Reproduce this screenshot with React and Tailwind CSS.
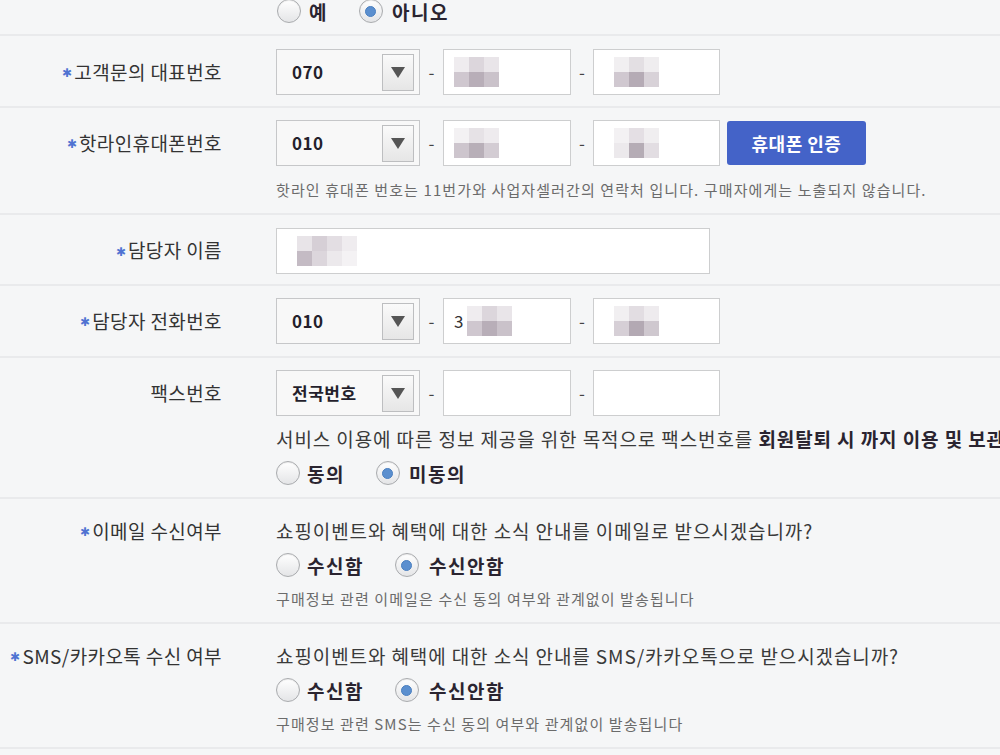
import React from 'react'

const font = { fontFamily: '"Noto Sans CJK KR", "Noto Sans", sans-serif' }

function Radio({ checked, label, gap = 'ml-[7px]' }) {
  return (
    <label className="flex items-center">
      <span className="w-[24px] h-[24px] rounded-full border border-[#a9abae] bg-gradient-to-b from-white to-[#e4e5e7] shadow-[inset_0_1px_1px_rgba(0,0,0,0.08)] flex items-center justify-center">
        {checked && <span className="w-[11px] h-[11px] rounded-full bg-[#5b8fcf] border border-[#4a7fc0]" />}
      </span>
      <span className={`${gap} text-[19px] font-bold tracking-[1.5px] text-[#2a2430] leading-none`}>{label}</span>
    </label>
  )
}

function Label({ children, className = 'h-[46px]', required = true }) {
  return (
    <div className={`w-[222px] shrink-0 flex items-center justify-end text-[19px] tracking-[0.4px] text-[#333] ${className}`}>
      {required && <span className="text-[#4f73d2] text-[12px] mr-[2px] leading-none">✱</span>}
      {children}
    </div>
  )
}

function Select({ value }) {
  return (
    <div className="w-[144px] h-[46px] border border-[#c6c7c9] bg-[#f8f8f8] flex items-center justify-between pl-[15px] pr-[5px]">
      <span className="text-[17px] font-bold tracking-[0.5px] text-[#241f2c]">{value}</span>
      <span className="w-[32px] h-[37px] border border-[#bdbec0] bg-gradient-to-b from-[#fafafa] to-[#e6e6e6] flex items-center justify-center">
        <svg width="14" height="11" viewBox="0 0 14 11">
          <path d="M0 0 H14 L7 11 Z" fill="#555" />
        </svg>
      </span>
    </div>
  )
}

function Mosaic({ rows, offset = 'ml-[10px]' }) {
  return (
    <div className={`${offset} flex flex-col`}>
      {rows.map((r, i) => (
        <div key={i} className="flex">
          {r.map((c, j) => (
            <span key={j} className="w-[15px] h-[15px] blur-[0.6px]" style={{ background: c }} />
          ))}
        </div>
      ))}
    </div>
  )
}

function Input({ w = 'w-[128px]', children }) {
  return (
    <div className={`${w} h-[46px] border border-[#cdcecf] bg-white flex items-center overflow-hidden`}>
      {children}
    </div>
  )
}

const A = [['#efecef', '#dcd6dc', '#e9e5e9'], ['#cfc7cf', '#b8aeb8', '#cac2ca']]
const B = [['#f1eff1', '#e3dfe3', '#efedef'], ['#d0c8d0', '#b5abb5', '#d8d2d8']]

function Phone({ value, m1 = A, m2 = B, first }) {
  return (
    <div className="flex items-center">
      <Select value={value} />
      <span className="w-[23px] text-center text-[17px] text-[#444]">-</span>
      <Input>
        {first && <span className="ml-[10px] text-[17px] text-[#333]">{first}</span>}
        {m1 && <Mosaic rows={m1} offset={first ? 'ml-[4px]' : 'ml-[10px]'} />}
      </Input>
      <span className="w-[22px] text-center text-[17px] text-[#444]">-</span>
      <Input w="w-[127px]">{m2 && <Mosaic rows={m2} offset="ml-[20px]" />}</Input>
    </div>
  )
}

export default function App() {
  return (
    <div className="min-h-screen w-[1000px] h-[755px] overflow-hidden bg-[#f5f6f7]" style={font}>
      {/* partial top row */}
      <div className="flex h-[36px] border-b-2 border-[#e9eaec]">
        <div className="w-[222px] shrink-0" />
        <div className="ml-[55px] -mt-[1px] flex gap-[31px] items-start">
          <Radio label="예" gap="ml-[8px]" />
          <Radio checked label="아니오" gap="ml-[9px]" />
        </div>
      </div>

      <div className="flex pt-[13px] h-[72px] border-b-2 border-[#e9eaec]">
        <Label>고객문의 대표번호</Label>
        <div className="ml-[54px]">
          <Phone value="070" />
        </div>
      </div>

      <div className="flex pt-[12px] h-[107px] border-b-2 border-[#e9eaec]">
        <Label>핫라인휴대폰번호</Label>
        <div className="ml-[54px] flex flex-col">
          <div className="flex items-center">
            <Phone value="010" m1={[['#f3f1f3', '#e6e2e6', '#eeebee'], ['#cdc5cd', '#b8afb8', '#d3ccd3']]} m2={[['#f3f1f3', '#e4dfe4', '#f0eef0'], ['#ece9ec', '#b5acb5', '#e2dde2']]} />
            <button className="ml-[7px] w-[139px] h-[44px] rounded-[3px] bg-[#4463c8] text-white text-[18px] font-bold tracking-[0.5px]">
              휴대폰 인증
            </button>
          </div>
          <p className="mt-[12px] text-[15px] tracking-[1.1px] text-[#6b6b6b] leading-[24px] whitespace-nowrap">
            핫라인 휴대폰 번호는 11번가와 사업자셀러간의 연락처 입니다. 구매자에게는 노출되지 않습니다.
          </p>
        </div>
      </div>

      <div className="flex pt-[13px] h-[71px] border-b-2 border-[#e9eaec]">
        <Label className="h-[45px]">담당자 이름</Label>
        <div className="ml-[54px]">
          <Input w="w-[434px]">
            <Mosaic rows={[['#e8e4e8', '#d6cfd6', '#e3dee3', '#efecef'], ['#c4bbc4', '#dcd6dc', '#ece9ec', '#f4f2f4']]} offset="ml-[20px]" />
          </Input>
        </div>
      </div>

      <div className="flex pt-[12px] h-[72px] border-b-2 border-[#e9eaec]">
        <Label>담당자 전화번호</Label>
        <div className="ml-[54px]">
          <Phone value="010" first="3" m2={[['#f1eff1', '#e2dde2', '#eeebee'], ['#d6cfd6', '#b3a9b3', '#cfc8cf']]} />
        </div>
      </div>

      <div className="flex pt-[12px] h-[141px] border-b-2 border-[#e9eaec]">
        <Label required={false}>팩스번호</Label>
        <div className="ml-[54px] flex flex-col">
          <Phone value="전국번호" m1={null} m2={null} />
          <p className="mt-[10px] text-[19px] tracking-[0.9px] text-[#3a3a3a] whitespace-nowrap leading-[26px]">
            서비스 이용에 따른 정보 제공을 위한 목적으로 팩스번호를 <b className="text-[#2a2430]">회원탈퇴 시 까지 이용 및 보관</b>
          </p>
          <div className="mt-[9px] flex gap-[31px]">
            <Radio label="동의" />
            <Radio checked label="미동의" gap="ml-[9px]" />
          </div>
        </div>
      </div>

      {[
        { label: '이메일 수신여부', q: '쇼핑이벤트와 혜택에 대한 소식 안내를 이메일로 받으시겠습니까?', h: '구매정보 관련 이메일은 수신 동의 여부와 관계없이 발송됩니다' },
        { label: 'SMS/카카오톡 수신 여부', q: '쇼핑이벤트와 혜택에 대한 소식 안내를 SMS/카카오톡으로 받으시겠습니까?', h: '구매정보 관련 SMS는 수신 동의 여부와 관계없이 발송됩니다' },
      ].map((r) => (
        <div key={r.label} className="flex pt-[18px] h-[125px] border-b-2 border-[#e9eaec]">
          <Label className="h-[28px]">{r.label}</Label>
          <div className="ml-[54px] flex flex-col">
            <p className="text-[19px] tracking-[0.9px] text-[#3a3a3a] leading-[28px] whitespace-nowrap">{r.q}</p>
            <div className="mt-[8px] flex gap-[31px]">
              <Radio label="수신함" />
              <Radio checked label="수신안함" gap="ml-[10px]" />
            </div>
            <p className="mt-[11px] text-[15px] tracking-[1.1px] text-[#6b6b6b] leading-[22px] whitespace-nowrap">{r.h}</p>
          </div>
        </div>
      ))}
    </div>
  )
}
